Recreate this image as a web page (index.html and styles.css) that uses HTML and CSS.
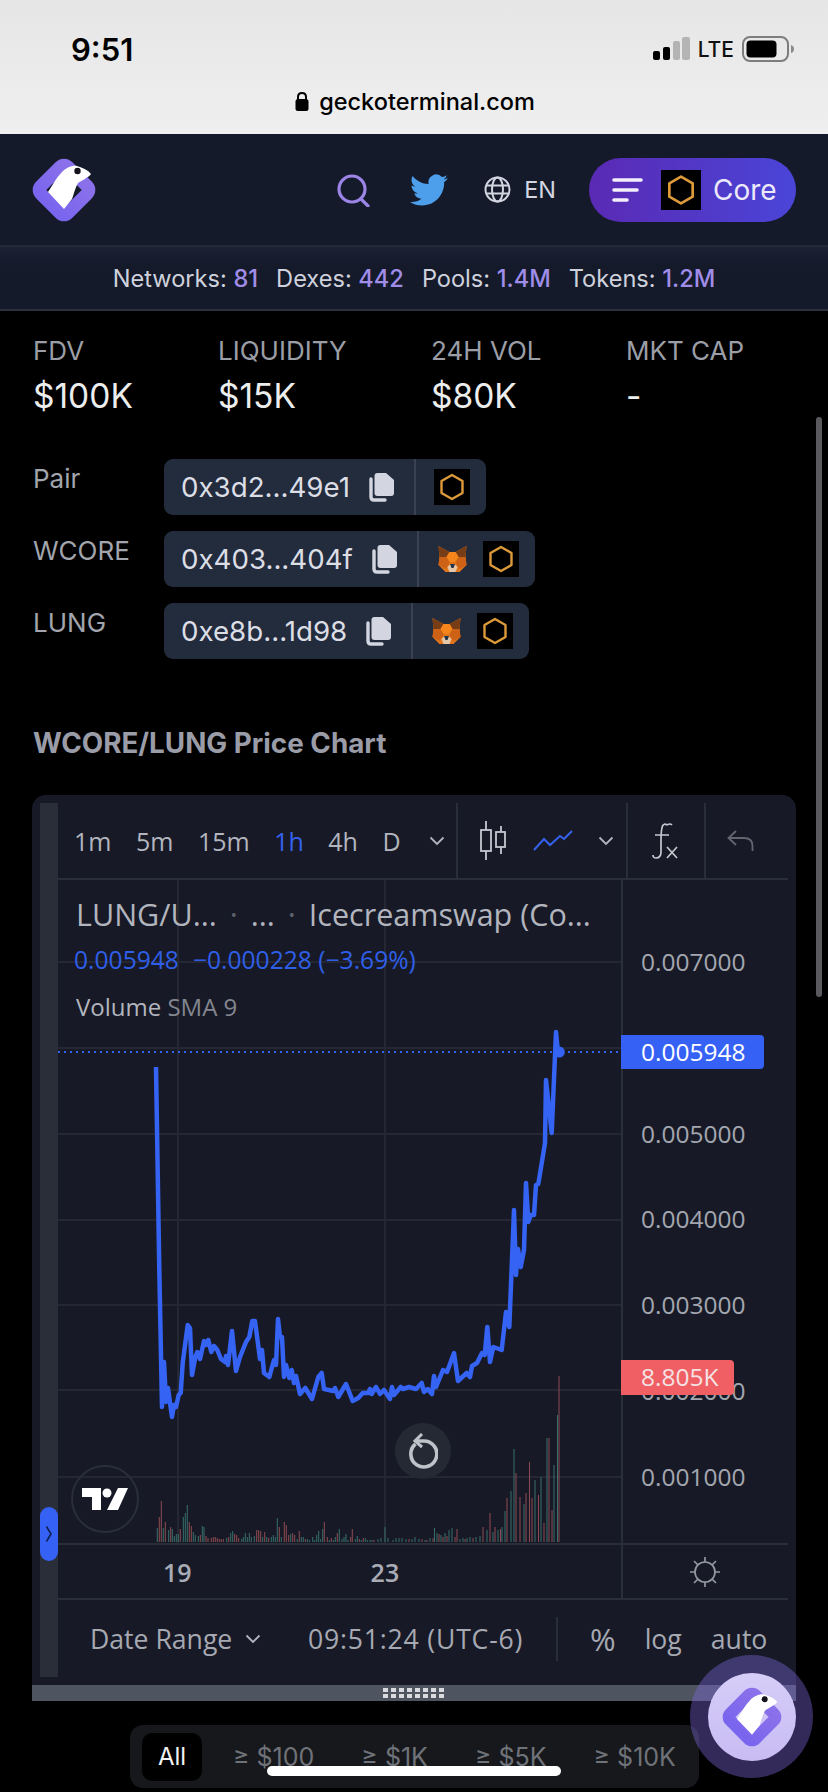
FILE: index.html
```html
<!DOCTYPE html>
<html lang="en">
<head>
<meta charset="utf-8">
<title>WCORE/LUNG - GeckoTerminal</title>
<link rel="stylesheet" href="styles.css">
</head>
<body>
<svg class="defs" width="0" height="0" aria-hidden="true">
  <defs>
    <linearGradient id="ringGrad" x1="0" y1="0" x2="0" y2="1"><stop offset="0" stop-color="#8a70ea"/><stop offset="1" stop-color="#7a66ee"/></linearGradient>
    <symbol id="gecko" viewBox="0 0 64 64">
      <rect x="13" y="13" width="38" height="38" rx="5" fill="none" stroke="url(#ringGrad)" stroke-width="13" transform="rotate(45 32 32)"/>
      <path d="M32 51 L16 34 C20 28 24 20 30 14 C34 10 40 7 45 8 C51 10 56 12 59 16 C56 20 50 22 46 25 C43 30 42 36 40 41 Z" fill="#fff"/>
      <circle cx="45.500" cy="13" r="3.200" fill="#15121c"/>
    </symbol>
    <symbol id="corehex" viewBox="0 0 36 36">
      <rect width="36" height="36" fill="#000"/>
      <path d="M18 6 L28.500 12 V24 L18 30 L7.500 24 V12 Z" fill="none" stroke="#dd9a3a" stroke-width="2.400" stroke-linejoin="round"/>
    </symbol>
    <symbol id="copy" viewBox="0 0 26 29">
      <path d="M9.500 0 H18 L26 7 V20 Q26 23 23 23 H9.500 Q6.500 23 6.500 20 V3 Q6.500 0 9.500 0 Z" fill="#d3d6e0"/>
      <path d="M3 6 V24 Q3 27 6 27 H17" fill="none" stroke="#d3d6e0" stroke-width="3.400" stroke-linecap="round"/>
    </symbol>
    <symbol id="fox" viewBox="0 0 30 28">
      <path d="M1 1 L12 7 H18 L29 1 L28 12 L29 20 L22 27 H8 L1 20 L2 12 Z" fill="#e2761b"/>
      <path d="M1 1 L12 7 L9 12 L2 12 Z M29 1 L18 7 L21 12 L28 12 Z" fill="#763d16"/>
      <path d="M12 7 H18 L21 12 L17 17 H13 L9 12 Z" fill="#f6851b"/>
      <path d="M2 12 L9 12 L12 18 L8 24 L1 20 Z M28 12 L21 12 L18 18 L22 24 L29 20 Z" fill="#cd6116"/>
      <path d="M10 22 L13 19 H17 L20 22 L18 27 H12 Z" fill="#e4c7a8"/>
      <path d="M12.500 19 H17.500 L16 23 H14 Z" fill="#233447"/>
    </symbol>
    <symbol id="chev" viewBox="0 0 16 10"><path d="M1.500 1.500 L8 8 L14.500 1.500" fill="none" stroke="currentColor" stroke-width="1.800"/></symbol>
  </defs>
</svg>

<header class="status">
  <div class="status-top">
    <span class="clock">9:51</span>
    <div class="status-icons">
      <svg class="signal" width="37" height="24" viewBox="0 0 37 24"><rect x="0" y="14" width="7" height="9" rx="2" fill="#000"/><rect x="10" y="10" width="7" height="13" rx="2" fill="#000"/><rect x="20" y="4" width="7" height="19" rx="2" fill="#b4b4b4"/><rect x="29" y="0" width="8" height="23" rx="2" fill="#b4b4b4"/></svg>
      <span class="lte">LTE</span>
      <svg class="battery" width="53" height="26" viewBox="0 0 53 26"><rect x="1" y="1" width="45" height="24" rx="7" fill="none" stroke="#7d7d7d" stroke-width="2"/><rect x="4.500" y="4.500" width="30" height="17" rx="4" fill="#000"/><path d="M49 9 Q52 10 52 13 Q52 16 49 17 Z" fill="#8a8a8a"/></svg>
    </div>
  </div>
  <div class="url">
    <svg width="14" height="19" viewBox="0 0 14 19"><path d="M3 8 V5 Q3 1 7 1 Q11 1 11 5 V8" fill="none" stroke="#000" stroke-width="2"/><rect x="0.500" y="7" width="13" height="12" rx="2.500" fill="#000"/></svg>
    <span>geckoterminal.com</span>
  </div>
</header>

<nav class="nav">
  <svg class="logo" width="64" height="64"><use href="#gecko"/></svg>
  <div class="nav-right">
    <svg class="search" width="34" height="33" viewBox="0 0 34 33"><circle cx="15" cy="15" r="13" fill="none" stroke="#9c85e6" stroke-width="3.200"/><path d="M24 25 L31 32" stroke="#9c85e6" stroke-width="3.200" stroke-linecap="round"/></svg>
    <svg class="bird" width="38" height="32" viewBox="0 0 24 20"><path transform="translate(0 -2)" fill="#4d9fec" d="M23.953 4.570a10 10 0 01-2.825.775 4.958 4.958 0 002.163-2.723c-.951.555-2.005.959-3.127 1.184a4.920 4.920 0 00-8.384 4.482C7.690 8.095 4.067 6.130 1.640 3.162a4.822 4.822 0 00-.666 2.475c0 1.710.870 3.213 2.188 4.096a4.904 4.904 0 01-2.228-.616v.060a4.923 4.923 0 003.946 4.827 4.996 4.996 0 01-2.212.085 4.936 4.936 0 004.604 3.417 9.867 9.867 0 01-6.102 2.105c-.390 0-.779-.023-1.170-.067a13.995 13.995 0 007.557 2.209c9.053 0 13.998-7.496 13.998-13.985 0-.210 0-.420-.015-.630A9.935 9.935 0 0024 4.590z"/></svg>
    <div class="lang">
      <svg width="27" height="27" viewBox="0 0 27 27" fill="none" stroke="#d3d6e0" stroke-width="2"><circle cx="13.500" cy="13.500" r="12"/><ellipse cx="13.500" cy="13.500" rx="5.500" ry="12"/><path d="M2 9.500 H25 M2 17.500 H25"/></svg>
      <span>EN</span>
    </div>
    <div class="net-btn">
      <svg width="31" height="24" viewBox="0 0 31 24"><path d="M2 2 H29 M2 12 H25 M2 22 H15" stroke="#f2eefc" stroke-width="3.600" stroke-linecap="round"/></svg>
      <svg class="net-hex" width="40" height="40"><use href="#corehex"/></svg>
      <span>Core</span>
    </div>
  </div>
</nav>

<section class="stats">
  <span>Networks: <b>81</b></span>
  <span>Dexes: <b>442</b></span>
  <span>Pools: <b>1.4M</b></span>
  <span>Tokens: <b>1.2M</b></span>
</section>

<section class="metrics">
  <div class="metric"><span class="m-label">FDV</span><span class="m-value">$100K</span></div>
  <div class="metric"><span class="m-label">LIQUIDITY</span><span class="m-value">$15K</span></div>
  <div class="metric"><span class="m-label">24H VOL</span><span class="m-value">$80K</span></div>
  <div class="metric"><span class="m-label">MKT CAP</span><span class="m-value">-</span></div>
</section>

<section class="addresses">
  <div class="addr-row">
    <span class="addr-label">Pair</span>
    <div class="pill">
      <div class="pill-main"><span>0x3d2...49e1</span><svg class="copy" width="26" height="29"><use href="#copy"/></svg></div>
      <div class="pill-links"><svg width="36" height="36"><use href="#corehex"/></svg></div>
    </div>
  </div>
  <div class="addr-row">
    <span class="addr-label">WCORE</span>
    <div class="pill">
      <div class="pill-main"><span>0x403...404f</span><svg class="copy" width="26" height="29"><use href="#copy"/></svg></div>
      <div class="pill-links"><svg width="31" height="28"><use href="#fox"/></svg><svg width="36" height="36"><use href="#corehex"/></svg></div>
    </div>
  </div>
  <div class="addr-row">
    <span class="addr-label">LUNG</span>
    <div class="pill">
      <div class="pill-main"><span>0xe8b...1d98</span><svg class="copy" width="26" height="29"><use href="#copy"/></svg></div>
      <div class="pill-links"><svg width="31" height="28"><use href="#fox"/></svg><svg width="36" height="36"><use href="#corehex"/></svg></div>
    </div>
  </div>
</section>

<h2 class="chart-title">WCORE/LUNG Price Chart</h2>

<section class="chart">
  <div class="strip">
    <div class="handle"><svg width="8" height="18" viewBox="0 0 8 18"><path d="M1.500 1.500 L6 9 L1.500 16.500" fill="none" stroke="#10204f" stroke-width="1.600"/></svg></div>
  </div>
  <div class="chart-main">
    <div class="toolbar">
      <div class="tb-group tb-times">
        <span>1m</span><span>5m</span><span>15m</span><span class="active">1h</span><span>4h</span><span>D</span>
        <svg class="chev" width="16" height="10"><use href="#chev"/></svg>
      </div>
      <div class="tb-group tb-types">
        <svg width="28" height="39" viewBox="0 0 28 39" fill="none" stroke="#c5c8d0" stroke-width="1.800"><path d="M7 0 V39 M22 5 V33"/><rect x="2" y="9" width="10" height="21" fill="#181b27"/><rect x="17" y="11" width="9" height="15" fill="#181b27"/></svg>
        <svg width="40" height="21" viewBox="0 0 40 21" fill="none" stroke="#3561f0" stroke-width="2"><path d="M1 20 L11 9 L17 15 L27 6 L31 9 L39 1"/></svg>
        <svg class="chev" width="16" height="10"><use href="#chev"/></svg>
      </div>
      <div class="tb-group tb-fx">
        <svg width="27" height="36" viewBox="0 0 27 36" fill="none" stroke="#c5c8d0" stroke-width="1.700"><path d="M15 2 Q12 0 10.500 3 Q9 7 9 17 V29 Q9 35 4 35 Q1 35 1 32 M15 2 Q18 0 20 2 M3 12 H17"/><path d="M15 24 L25 35 M25 24 L15 35"/></svg>
      </div>
      <div class="tb-group tb-undo">
        <svg width="27" height="21" viewBox="0 0 27 21" fill="none" stroke="#63666f" stroke-width="1.800"><path d="M9 1 L1.500 8 L9 15 M1.500 8 H17 Q25.500 8 25.500 16 V21"/></svg>
      </div>
    </div>

    <div class="plot-row">
      <div class="plot">
        <svg class="plot-svg" width="563" height="663" viewBox="58 880 563 663">
          <path class="grid" d="M178 880V1543M385 880V1543M58 962H621M58 1048H621M58 1134H621M58 1220H621M58 1305H621M58 1390H621M58 1477H621"/>
          <path class="dotted" d="M58 1052H621"/>
          <path class="vol-r" d="M159.300 1542V1517M161.300 1542V1501M165.300 1542V1522M170.700 1542V1527M180.300 1542V1529M189.300 1542V1522M191.300 1542V1526M200.300 1542V1535M206 1542V1536M208 1542V1538M211.300 1542V1538M213.300 1542V1537M215.300 1542V1537M217.300 1542V1538M219.300 1542V1539M221.300 1542V1539M223.300 1542V1539M228.700 1542V1537M234.700 1542V1534M236.700 1542V1535M238.700 1542V1538M256.700 1542V1530M258.700 1542V1530M260.700 1542V1531M264.700 1542V1532M268.700 1542V1538M279.300 1542V1527M284.300 1542V1522M286.300 1542V1525M288.700 1542V1535M292.700 1542V1533M294.700 1542V1535M299.300 1542V1531M305.300 1542V1539M324.300 1542V1522M327.300 1542V1537M331.300 1542V1538M337.300 1542V1533M350.700 1542V1537M352.300 1542V1529M359.300 1542V1539M363.300 1542V1538M374 1542V1540M409 1542V1539M422 1542V1539M427 1542V1540M433 1542V1538M439 1542V1534M443 1542V1537M447 1542V1536M455 1542V1537M457 1542V1529M465 1542V1539M473 1542V1538M483 1542V1527M490 1542V1513M495 1542V1527M500.500 1542V1529M507 1542V1498M516 1542V1473M520 1542V1497M526 1542V1493M529.500 1542V1462M532 1542V1498M538.500 1542V1495M544 1542V1523M549 1542V1438M552 1542V1510M559 1542V1376"/>
          <path class="vol-g" d="M157.300 1542V1528M163.300 1542V1528M168.700 1542V1530M172.300 1542V1529M174.300 1542V1536M176.300 1542V1534M178.300 1542V1534M183.300 1542V1517M185.300 1542V1513M187.300 1542V1505M193.300 1542V1532M195.300 1542V1535M198.300 1542V1536M202.300 1542V1526M204 1542V1527M226.700 1542V1538M230.700 1542V1533M232.700 1542V1531M241.700 1542V1539M243.300 1542V1537M245.300 1542V1533M247.300 1542V1537M249.300 1542V1533M251.300 1542V1537M254.300 1542V1536M262.700 1542V1537M266.700 1542V1537M271.300 1542V1537M273.300 1542V1535M275.300 1542V1537M277.300 1542V1518M281.300 1542V1537M290.700 1542V1534M297.300 1542V1539M301.300 1542V1537M303.300 1542V1537M307.300 1542V1539M309.300 1542V1540M312.700 1542V1537M314.700 1542V1540M316.700 1542V1535M318.700 1542V1531M320.700 1542V1539M322.700 1542V1529M329.300 1542V1540M333.300 1542V1540M335.300 1542V1537M339.300 1542V1529M342 1542V1539M344 1542V1537M346 1542V1534M348 1542V1540M355.300 1542V1539M357.300 1542V1536M361.300 1542V1540M365.300 1542V1538M367.300 1542V1540M370 1542V1540M372 1542V1540M378 1542V1539M381 1542V1538M385 1542V1527M388 1542V1538M393 1542V1540M396 1542V1538M399 1542V1538M402 1542V1538M406 1542V1539M412 1542V1539M415 1542V1537M419 1542V1539M425 1542V1540M430 1542V1538M434.500 1542V1528M437 1542V1533M441 1542V1535M445 1542V1533M449 1542V1530M452 1542V1528M460 1542V1539M463 1542V1538M467 1542V1538M470 1542V1537M476 1542V1537M480 1542V1536M487 1542V1530M493 1542V1532M498 1542V1530M502 1542V1527M505 1542V1511M511 1542V1491M514 1542V1449M524 1542V1504M535 1542V1480M541 1542V1477M547 1542V1438M554 1542V1465M557.500 1542V1415"/>
          <path class="price" d="M156 1067L159.300 1270L162 1407L164 1362L166 1402L168 1388L172 1417L174 1405L176 1407L178.700 1395L180.700 1393L182.700 1363L187.700 1325L190 1328L192 1375L195.300 1357L197.300 1352L200 1359L204 1341L206 1345L208.300 1340L211.300 1352L214 1346L217.300 1350L221 1359L225 1362L226 1356L228 1365L232 1331L236 1371L240 1357L246 1342L249.300 1337L252.300 1321L255 1321L260 1359L262 1350L264 1373L269.300 1377L274 1360L276 1365L278 1319L280 1337L282 1337L284 1377L286 1365L289.300 1378L291.700 1370L294 1383L296 1376L300 1394L305.300 1388L312 1399L318.300 1377L321.700 1373L324 1389L333.300 1391L335 1388L338.300 1397L346 1384L352.700 1401L358.300 1398L362.700 1393L368.300 1393L370 1389L371.700 1394L376 1387L380 1394L384 1390L390 1399L392 1387L394 1395L400.700 1387L403 1389L409 1387L416 1389L421.700 1383L424 1392L427.700 1389L432 1394L434 1376L436 1387L443 1370L447 1372L454 1353L458 1381L466.700 1373L470 1377L472 1366L477 1363L482 1353L484.700 1355L487.300 1327L490 1362L493.300 1347L501.700 1350L506 1312L509.300 1327L514 1210L516 1275L518 1249L520.700 1267L524 1250L526 1183L528.300 1222L530.700 1215L534 1215L536 1185L538.300 1184L545 1143L546 1080L551.700 1133L556 1032L557.700 1050"/>
          <circle class="price-dot" cx="559.300" cy="1052" r="5.500"/>
        </svg>
        <div class="legend">
          <div class="lg-title"><span>LUNG/U...</span><i>·</i><span>...</span><i>·</i><span>Icecreamswap (Co...</span></div>
          <div class="lg-values"><span>0.005948</span><span>−0.000228 (−3.69%)</span></div>
          <div class="lg-vol">Volume <em>SMA 9</em></div>
        </div>
        <div class="tv-badge">
          <svg width="46" height="23" viewBox="0 0 46 23"><path fill="#fff" d="M0 0 H19 V22 H10 V9 H0 Z"/><circle cx="25" cy="5" r="4.500" fill="#fff"/><path fill="#fff" d="M36 0 H46 L36 22 H25 Z"/></svg>
        </div>
        <div class="reset">
          <svg width="30" height="36" viewBox="0 0 30 36" fill="none" stroke="#bfc2c9" stroke-width="3.600"><path d="M7.500 11 A13 13 0 1 0 15 8 H9"/><path d="M14 1 L7 8 L14 14" stroke-width="3"/></svg>
        </div>
      </div>
      <div class="axis">
        <span>0.007000</span><span class="hidden-tick">0.006000</span><span>0.005000</span><span>0.004000</span><span>0.003000</span><span>0.002000</span><span>0.001000</span>
        <div class="tag tag-blue">0.005948</div>
        <div class="tag tag-red">8.805K</div>
      </div>
    </div>

    <div class="time-row">
      <div class="dates"><span class="d19">19</span><span class="d23">23</span></div>
      <div class="gear-cell">
        <svg width="30" height="30" viewBox="0 0 30 30" fill="none" stroke="#9498a1" stroke-width="1.700"><circle cx="15" cy="15" r="10"/><path d="M15 0 V5 M15 25 V30 M0 15 H5 M25 15 H30 M4 4 L8 8 M22 22 L26 26 M26 4 L22 8 M8 22 L4 26"/></svg>
      </div>
    </div>

    <div class="chart-foot">
      <div class="range">Date Range<svg class="chev" width="16" height="10"><use href="#chev"/></svg></div>
      <span class="clock-utc">09:51:24 (UTC-6)</span>
      <div class="foot-opts"><span class="pct">%</span><span>log</span><span>auto</span></div>
    </div>
  </div>
</section>

<div class="resize"><span class="grip"></span></div>

<section class="filters">
  <span class="f-all">All</span>
  <span>≥ $100</span><span>≥ $1K</span><span>≥ $5K</span><span>≥ $10K</span>
</section>

<div class="scrollbar"></div>
<div class="fab"><div class="fab-inner"><svg width="60" height="60"><use href="#gecko"/></svg></div></div>
<div class="home"></div>
</body>
</html>
```

FILE: styles.css
```css
* { box-sizing: border-box; }
html, body { margin: 0; padding: 0; }
body {
  position: relative;
  width: 828px;
  height: 1792px;
  overflow: hidden;
  background: #000;
  color: #e6e7ea;
  font-family: Inter, "Liberation Sans", sans-serif;
}
.defs { position: absolute; }
svg { display: block; flex: none; }

/* iOS chrome */
.status {
  height: 134px;
  background: linear-gradient(#e6e6e6, #efefef);
  color: #000;
}
.status-top {
  height: 84px;
  padding: 0 33px 0 71px;
  display: flex;
  align-items: center;
  justify-content: space-between;
  padding-top: 14px;
}
.clock { font-size: 31px; font-weight: 600; }
.status-icons { display: flex; align-items: center; gap: 8px; }
.lte { font-size: 21px; font-weight: 500; color: #111; }
.url {
  display: flex;
  justify-content: center;
  align-items: center;
  gap: 10px;
  font-size: 23.500px;
  font-weight: 500;
  padding-top: 3px;
  padding-left: 2px;
}

/* nav */
.nav {
  height: 111px;
  background: #141a2a;
  padding: 0 32px;
  display: flex;
  align-items: center;
  justify-content: space-between;
}
.logo { margin-top: 1px; }
.nav-right { display: flex; align-items: center; }
.search { margin-right: 39px; margin-top: 1px; }
.bird { margin-right: 36px; margin-top: 1px; }
.lang { display: flex; align-items: center; gap: 13px; font-size: 23.500px; color: #d3d6e0; margin-right: 33px; }
.net-btn {
  width: 207px;
  height: 64px;
  border-radius: 32px;
  background: linear-gradient(90deg, #5a2ab4, #4a45d8);
  display: flex;
  align-items: center;
  padding-left: 23px;
  color: #ece9fb;
  font-size: 28px;
}
.net-hex { margin: 0 12px 0 18px; }

/* stats */
.stats {
  height: 66px;
  background: linear-gradient(#1c2233, #141a2a 30%);
  border-top: 2px solid #232836;
  border-bottom: 2px solid #2a2f3d;
  display: flex;
  align-items: center;
  justify-content: center;
  gap: 18px;
  font-size: 23.600px;
  color: #cfd2dc;
}
.stats b { font-weight: 500; color: #a08de8; }

/* metrics */
.metrics {
  display: grid;
  grid-template-columns: 185px 213px 195px 1fr;
  padding: 22px 0 0 33px;
}
.metric { display: flex; flex-direction: column; gap: 7px; }
.m-label { font-size: 26px; line-height: 36px; color: #9b9ea6; }
.m-value { font-size: 33.500px; line-height: 40px; color: #eceded; }

/* addresses */
.addresses {
  padding: 43px 0 0 33px;
  display: flex;
  flex-direction: column;
  gap: 16px;
}
.addr-row { display: flex; height: 56px; }
.addr-label { width: 131px; font-size: 26px; line-height: 40px; color: #a2a5ad; }
.pill {
  height: 56px;
  border-radius: 9px;
  background: #232c3d;
  display: flex;
  align-items: stretch;
  font-size: 27.700px;
  color: #dcdee6;
}
.pill-main {
  display: flex;
  align-items: center;
  padding: 0 20px 0 17px;
  gap: 18px;
  border-right: 2px solid #3a4252;
}
.pill-links { display: flex; align-items: center; gap: 15px; padding: 0 16px 0 18px; }

.chart-title {
  margin: 66px 0 0 33px;
  font-size: 27.800px;
  line-height: 36px;
  font-weight: 700;
  color: #9a9ca8;
}

/* chart */
.chart {
  margin: 34px 32px 0;
  height: 890px;
  padding: 8px 8px 0;
  border-radius: 14px 14px 0 0;
  background: #171a26;
  display: flex;
  font-family: "Open Sans", Inter, sans-serif;
  color: #b2b5be;
}
.strip { position: relative; width: 18px; height: 874px; background: #2a2e39; }
.handle {
  position: absolute;
  left: 0; top: 704px;
  width: 18px; height: 54px;
  border-radius: 9px;
  background: #3561f5;
  display: flex; align-items: center; justify-content: center;
}
.chart-main { flex: 1; display: flex; flex-direction: column; min-width: 0; }
.toolbar { height: 77px; display: flex; border-bottom: 2px solid #2a2e39; }
.tb-group { display: flex; align-items: center; border-right: 2px solid #2a2e39; }
.tb-times { width: 400px; padding-left: 16px; font-size: 25px; }
.tb-times span { margin-right: 24.500px; }
.tb-times .chev { margin-left: 4px; }
.tb-times .active { color: #3561f0; }
.tb-types { width: 170px; padding-left: 21px; gap: 26px; }
.tb-types .chev { margin-left: -1px; }
.tb-fx { width: 78px; padding-left: 24px; }
.tb-undo { border-right: 0; padding-left: 21px; }
.chev { color: #b2b5be; }

.plot-row { height: 663px; display: flex; }
.plot { position: relative; width: 563px; height: 663px; }
.plot-svg { position: absolute; left: 0; top: 0; }
.grid { stroke: #252833; stroke-width: 2; fill: none; }
.dotted { stroke: #3561f0; stroke-width: 2; stroke-dasharray: 2 4; fill: none; }
.vol-r { stroke: #8f4a52; stroke-width: 1; fill: none; }
.vol-g { stroke: #38706c; stroke-width: 1; fill: none; }
.price { stroke: #3563f3; stroke-width: 4.500; fill: none; stroke-linejoin: round; }
.price-dot { fill: #3563f3; }

.legend { position: absolute; left: 18px; top: 14px; }
.lg-title { display: flex; align-items: center; font-size: 30.500px; line-height: 40px; color: #b2b5be; }
.lg-title i { font-style: normal; color: #5f636c; margin: 0 13px; }
.lg-values { display: flex; gap: 14px; margin-top: 10px; font-size: 24.600px; line-height: 32px; color: #2f5fe8; margin-left: -2px; }
.lg-vol { margin-top: 14px; font-size: 24px; line-height: 34px; }
.lg-vol em { font-style: normal; color: #83868f; }

.tv-badge {
  position: absolute;
  left: 13px; top: 585px;
  width: 68px; height: 68px;
  border-radius: 50%;
  border: 2px solid #2a2e39;
  display: flex; align-items: center; justify-content: center;
}
.reset {
  position: absolute;
  left: 337px; top: 543px;
  width: 56px; height: 56px;
  border-radius: 50%;
  background: #252934;
  display: flex; align-items: center; justify-content: center;
}

.axis {
  position: relative;
  flex: 1;
  border-left: 2px solid #2a2e39;
  padding: 39px 0 0 18px;
  display: flex;
  flex-direction: column;
  font-size: 24.500px;
  color: #a3a6af;
}
.axis span { height: 85.800px; line-height: 86px; }
.hidden-tick { visibility: hidden; }
.tag {
  position: absolute;
  left: -2px;
  height: 34px;
  padding-left: 20px;
  line-height: 34px;
  color: #fff;
  font-size: 24.500px;
  border-radius: 0 4px 4px 0;
}
.tag-blue { top: 155px; width: 143px; background: #3561f5; }
.tag-red { top: 480px; width: 113px; height: 35px; background: #ef5f63; color: #f5e3e4; }

.time-row { height: 57px; display: flex; border-top: 2px solid #2a2e39; border-bottom: 2px solid #2a2e39; }
.dates { position: relative; width: 563px; font-size: 25px; font-weight: 600; color: #a9acb5; display: flex; align-items: center; }
.d19 { margin-left: 105px; }
.d23 { margin-left: 179px; }
.gear-cell { flex: 1; border-left: 2px solid #2a2e39; display: flex; align-items: center; padding-left: 67px; }

.chart-foot {
  height: 78px;
  display: flex;
  align-items: center;
  padding: 0 0 0 32px;
  font-size: 26.600px;
  color: #a6a9b2;
}
.range { display: flex; align-items: center; gap: 13px; width: 218px; }
.clock-utc { width: 250px; border-right: 2px solid #2a2e39; line-height: 44px; letter-spacing: .8px; white-space: nowrap; }
.foot-opts { display: flex; align-items: center; gap: 29px; padding-left: 32px; }
.pct { font-size: 31px; }

.resize {
  margin: 0 32px;
  height: 16px;
  background: #4e5560;
  display: flex; align-items: center; justify-content: center;
}
.grip {
  width: 62px; height: 10px;
  background-image: repeating-linear-gradient(90deg, #d8dade 0 5px, transparent 5px 8px),
                    linear-gradient(#4e5560 0 0);
  -webkit-mask-image: repeating-linear-gradient(#000 0 4px, transparent 4px 6px);
}

.filters {
  margin: 24px 0 0 130px;
  width: 569px;
  height: 63px;
  background: #16181c;
  border-radius: 13px;
  display: flex;
  align-items: center;
  font-size: 25px;
  color: #6f7278;
  padding-left: 12px;
  gap: 47px;
}
.f-all {
  width: 60px; height: 48px;
  margin-right: -16px;
  background: #000;
  border-radius: 10px;
  color: #f2f2f2;
  font-size: 24px;
  display: flex; align-items: center; justify-content: center;
}

/* overlays */
.scrollbar {
  position: absolute;
  left: 816px; top: 417px;
  width: 6px; height: 580px;
  border-radius: 3px;
  background: #5a5a5e;
}
.fab {
  position: absolute;
  left: 690px; top: 1655px;
  width: 123px; height: 123px;
  border-radius: 50%;
  background: rgba(128, 106, 222, .4);
  display: flex; align-items: center; justify-content: center;
}
.fab-inner {
  width: 88px; height: 88px;
  border-radius: 50%;
  background: linear-gradient(#d6cdf8, #c8bcf3);
  display: flex; align-items: center; justify-content: center;
}
.home {
  position: absolute;
  left: 267px; top: 1766px;
  width: 294px; height: 10px;
  border-radius: 5px;
  background: #fff;
}
```
